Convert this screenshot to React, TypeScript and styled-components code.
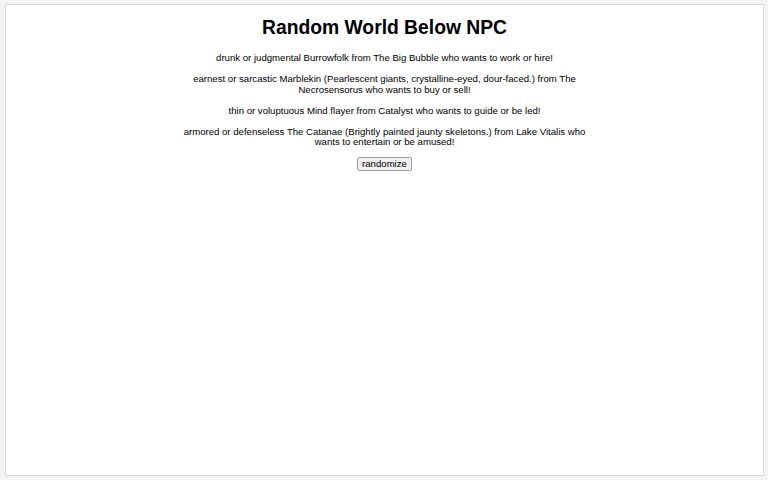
import styled, { createGlobalStyle } from 'styled-components';

const GlobalStyle = createGlobalStyle`
  html, body {
    margin: 0;
    padding: 0;
    background: #f3f3f3;
  }
  body {
    font-family: "Liberation Sans", Arial, sans-serif;
    color: #000;
  }
`;

const Page = styled.div`
  padding: 4px 4px 4px 5px;
  box-sizing: border-box;
  height: 480px;
`;

const Panel = styled.main`
  box-sizing: border-box;
  height: 472px;
  background: #fff;
  border: 1px solid #dcdcdc;
  display: flex;
  flex-direction: column;
  align-items: center;
  padding-top: 11px;
`;

const Title = styled.h1`
  font-size: 19.3px;
  font-weight: 700;
  margin: 0 0 13px;
  line-height: 24px;
`;

const List = styled.div`
  width: 404px;
  display: flex;
  flex-direction: column;
  gap: 10.5px;
  text-align: center;
`;

const Npc = styled.p`
  margin: 0;
  font-size: 9.6px;
  line-height: 10.5px;
`;

const Button = styled.button`
  margin-top: 9px;
  font-family: "Liberation Sans", Arial, sans-serif;
  font-size: 9.6px;
  line-height: 12px;
  padding: 0 4px;
  background: #f0f0f0;
  border: 1px solid #9a9a9a;
  border-radius: 2px;
  color: #000;
`;

const npcs = [
  'drunk or judgmental Burrowfolk from The Big Bubble who wants to work or hire!',
  'earnest or sarcastic Marblekin (Pearlescent giants, crystalline-eyed, dour-faced.) from The Necrosensorus who wants to buy or sell!',
  'thin or voluptuous Mind flayer from Catalyst who wants to guide or be led!',
  'armored or defenseless The Catanae (Brightly painted jaunty skeletons.) from Lake Vitalis who wants to entertain or be amused!',
];

export default function App() {
  return (
    <>
      <GlobalStyle />
      <Page>
        <Panel>
          <Title>Random World Below NPC</Title>
          <List>
            {npcs.map((text, i) => (
              <Npc key={i}>{text}</Npc>
            ))}
          </List>
          <Button>randomize</Button>
        </Panel>
      </Page>
    </>
  );
}
